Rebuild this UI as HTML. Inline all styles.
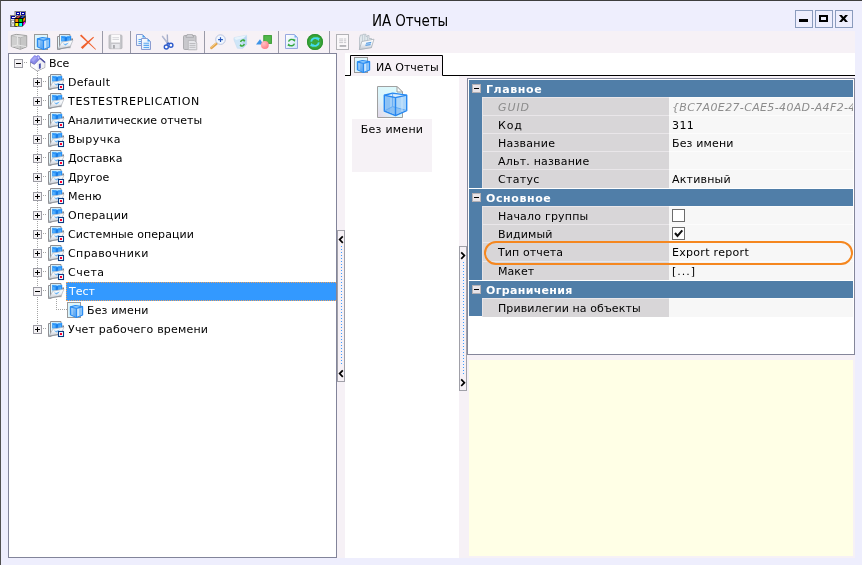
<!DOCTYPE html><html><head><meta charset="utf-8"><title>ИА Отчеты</title><style>html,body{margin:0;padding:0;background:#eeeefd;overflow:hidden}
body{width:862px;height:565px;position:relative;font-family:"DejaVu Sans","Liberation Sans",sans-serif;font-size:11px;color:#000}
#win{will-change:transform;position:absolute;left:0;top:0;width:862px;height:565px;background:#eeeefd;border-top:1px solid #3e3e3e;border-left:1px solid #505050;box-sizing:border-box}
#win>*{position:absolute}
.ic{position:absolute;overflow:visible}
#win>.ic{margin-left:-1px;margin-top:-1px}
#title{left:371px;top:13px;font-family:"DejaVu Sans Condensed","Liberation Sans",sans-serif;font-size:15px;letter-spacing:-.1px;line-height:17px;margin-top:-1px;white-space:nowrap}
.wb{top:9px;width:16px;height:16px;border:1px solid #8a9bbd;margin-left:-1px}
.wb i{position:absolute;display:block}
.mn{left:3px;top:8px;width:9px;height:3px;background:#000}
.mx{left:3px;top:4px;width:5px;height:3px;border:2px solid #000}
#panel{left:7px;top:30px;width:847px;height:527px;background:#f6f1f6}
#panel>*{position:absolute}
.tsep{top:0;width:1px;height:22px;background:#9a9aa8}
#tree{left:0;top:22px;width:327px;height:503px;border:1px solid #82849a;background:#fff;overflow:hidden}
#tree>*{position:absolute}
.tl{height:19px;line-height:20px;padding:0 3px;white-space:nowrap}
.tl.sel{background:#3399ff;color:#fff;right:0;height:17px;line-height:18px;top:228px !important;border:1px dotted #e8a060;border-right:0;left:57px !important;padding-left:2px}
.eb{width:7px;height:7px;border:1px solid #9c9ca4;background:#f4f2f4;position:absolute}
.eb:before{content:"";position:absolute;left:1px;top:3px;width:5px;height:1px;background:#000}
.eb.plus:after{content:"";position:absolute;left:3px;top:1px;width:1px;height:5px;background:#000}
.hd{height:1px;background:linear-gradient(90deg,#a4a4a4 50%,transparent 50%) 0 0/2px 1px}
.vd{width:1px;background:linear-gradient(180deg,#a4a4a4 50%,transparent 50%) 0 0/1px 2px}
.sph{width:6px;border:1px solid #a0a0a8;background:#f6f1f6;box-sizing:content-box}
.sph svg{position:absolute;left:-1px;top:-1px}
#tabstrip{left:337px;top:22px;width:510px;height:22px;background:#fff}
#tab{left:337px;top:22px}
#tabtxt{left:368px;top:30px;line-height:14px;white-space:nowrap}
#ilist{left:337px;top:45px;width:114px;height:482px;background:#fff}
#item{position:absolute;left:7px;top:9px;width:80px;height:87px;background:#f6f2f6}
#itemtop{position:absolute;left:0;top:0;width:80px;height:34px;background:#fff}
#itemtxt{position:absolute;left:0;top:38px;letter-spacing:.25px;width:80px;text-align:center;line-height:14px;white-space:nowrap}
#pg{left:459px;top:47px;width:384px;height:273px;border:1px solid #84869a;background:#fff;padding:1px}
#pg>*{position:absolute}
.gh{left:1px;width:384px;height:17px;background:#507ea8;color:#fff;font-weight:bold}
.gh span{position:absolute;left:17px;top:3px;line-height:14px;letter-spacing:.6px;white-space:nowrap}
.gb{left:3px;top:4px;background:#e8e4e8;border-color:#b4b0b4}
.gl,.gv{margin-top:0px;line-height:20px;white-space:nowrap;overflow:hidden;box-sizing:border-box}
.gl{left:14px;width:187px;border-left:1px solid #e6e3e6;border-top:1px solid #e9e6e9;background:#d8d6d8;padding-left:15px}
.gv{left:201px;width:184px;background:#f7f7f7;padding-left:3px;border-top:1px solid #fcfcfc}
.dis{color:#8c8c8c;font-style:italic}
.gw{left:1px;width:384px;height:1px;background:#fff}
.cb{display:inline-block;width:11px;height:11px;border:1px solid #6c6c6c;background:#fff;vertical-align:top;margin-top:2px;position:relative}
.cb svg{position:absolute;left:0;top:0}
#pill{left:16px;top:162px;width:365px;height:20px;border:2px solid #f5871f;border-radius:12px}
#yellow{left:461px;top:329px;width:384px;height:196px;background:#ffffe6}

#strip{left:1px;top:1px;width:13px;height:236px;background:#507ea8}
#tabfill{left:435px;top:45px;width:16px;height:2px;background:#fff}
</style></head><body>
<svg width="0" height="0" style="position:absolute"><defs>
<linearGradient id="g-page" x1="0" y1="0" x2="1" y2="1"><stop offset="0" stop-color="#ffffff"/><stop offset="1" stop-color="#cfe4fa"/></linearGradient>
<linearGradient id="g-flap" x1="0" y1="0" x2="0" y2="1"><stop offset="0" stop-color="#ffffff"/><stop offset=".45" stop-color="#f0f4f8"/><stop offset="1" stop-color="#c4c8d0"/></linearGradient>
<linearGradient id="g-cl" x1="0" y1="0" x2=".6" y2="1"><stop offset="0" stop-color="#94c8f8"/><stop offset="1" stop-color="#5ea8f2"/></linearGradient>
<linearGradient id="g-cr" x1="0" y1="0" x2="1" y2="0"><stop offset="0" stop-color="#b8dcfc"/><stop offset="1" stop-color="#88c2f8"/></linearGradient>
<linearGradient id="g-bpage" x1="1" y1="0" x2="0" y2="1"><stop offset="0" stop-color="#dcfbfd"/><stop offset=".6" stop-color="#dcf6fb"/><stop offset="1" stop-color="#e4d6e8"/></linearGradient>
<radialGradient id="g-pink" cx=".35" cy=".3" r=".8"><stop offset="0" stop-color="#ffc0c4"/><stop offset="1" stop-color="#ff7884"/></radialGradient>
<symbol id="i-app" viewBox="0 0 16 17" overflow="visible">
<rect x="5" y="0.500" width="10.500" height="10" fill="#d8d8d8" stroke="#808080" stroke-width="1"/>
<rect x="6" y="1" width="4" height="3" fill="#0000a0"/><rect x="11" y="1" width="4" height="3" fill="#0000a0"/>
<rect x="7" y="2" width="2" height="1" fill="#fff"/><rect x="12" y="2" width="2" height="1" fill="#fff"/>
<rect x="0.500" y="4.500" width="6" height="11" fill="#d8d8d8" stroke="#808080" stroke-width="1"/>
<rect x="1" y="5" width="4" height="3" fill="#0000a0"/><rect x="2" y="6" width="3" height="1" fill="#fff"/>
<rect x="1.500" y="9.500" width="3" height="2" fill="#fff" stroke="#808080" stroke-width=".6"/><rect x="1.500" y="13" width="3" height="2" fill="#fff" stroke="#808080" stroke-width=".6"/>
<path d="M4.500 7.500 L8 4.500 H15.500 V12 L12.500 15.500 H4.500 Z" fill="#000"/>
<path d="M6 6.800 L8 5.300 H10.800 L8.800 6.800 Z" fill="#ff6060"/><path d="M10.200 6.800 L12.200 5.300 H15 L13 6.800 Z" fill="#3060ff"/>
<rect x="5.300" y="8" width="3" height="3" fill="#ff8c00"/><rect x="9.200" y="8" width="3" height="3" fill="#00e000"/>
<rect x="5.300" y="12" width="3" height="3" fill="#ffff00"/><rect x="9.200" y="12" width="3" height="3" fill="#00ffff"/>
<path d="M13.200 8 L15 6.200 V9.300 L13.200 11 Z" fill="#ff8c00"/><path d="M13.200 12 L15 10.200 V12.300 L13.200 14.500 Z" fill="#ff00ff"/>
</symbol>
<symbol id="i-cube_g" viewBox="0 0 16 16" overflow="visible">
<path d="M0.300 1.600 L5.300 0.400 L15.700 1.600 V12.800 L9.300 15.300 L0.300 12.500 Z" fill="#d6d6d6" stroke="#9c9c9c" stroke-width="1" stroke-linejoin="round"/>
<path d="M0.800 2.200 L9 4.100 V14.700 L0.800 12.100Z" fill="#cfcfcf"/>
<path d="M9.800 4.100 L15.200 2.200 V12.400 L9.800 14.600Z" fill="#c6c6c6"/>
<path d="M0.300 1.600 L9.300 3.700 L15.700 1.600 M9.300 3.700 V15.300" fill="none" stroke="#b0b0b0" stroke-width="1"/>
<path d="M6.500 1.500 V11 L0.800 12.300 M6.500 11 L15.300 12.600" fill="none" stroke="#e6e6e6" stroke-width="1"/>
<path d="M1.500 1.900 L5.500 1 L14 1.900 L9.300 3.200Z" fill="#e2e2e2"/>
</symbol>
<symbol id="i-cube" viewBox="0 0 16 16" overflow="visible">
<rect x="0.500" y="0.500" width="13" height="15" fill="#dcf5fc" stroke="#9a9a9a" stroke-width="1"/>
<path d="M3.400 4.900 L8.300 3.600 L15.600 4.700 V13 L9.400 15.500 L3.400 12.800 Z" fill="#7cbcf8" stroke="#2a8cf2" stroke-width="1.200" stroke-linejoin="round"/>
<path d="M4.100 5.800 L8.700 7 V14.400 L4.100 12.400Z" fill="url(#g-cl)"/>
<path d="M10.100 7 L14.900 5.600 V12.600 L10.100 14.500Z" fill="url(#g-cr)"/>
<path d="M3.400 4.900 L9.400 6.300 L15.600 4.700 M9.400 6.300 V15.500" fill="none" stroke="#2a8cf2" stroke-width="1.200"/>
<path d="M5.500 4.900 L8.400 4 L13 4.800 L9.400 5.600Z" fill="#8ccafc"/>
<path d="M11.200 6.800 V14 " stroke="#e0f2ff" stroke-width=".9"/>
<path d="M13 6.200 V13.300" stroke="#6cb4f6" stroke-width=".8"/>
<path d="M5.300 6.300 V12.800" stroke="#a4d2fa" stroke-width=".8"/>
</symbol>
<symbol id="i-fold" viewBox="0 0 16 16" overflow="visible">
<path d="M0.500 2.500 H3 V15.500 H0.500Z" fill="#e4f6fb" stroke="#909094" stroke-width="1"/>
<path d="M2.500 0.500 H13 V13.300 H2.500Z" fill="#dff5fc" stroke="#8e8e92" stroke-width="1"/>
<path d="M7 13 H13.500 V14.200 H7Z" fill="#b4b4b8"/>
<rect x="4.200" y="1.900" width="10" height="5.600" fill="#2690f6"/>
<path d="M4.600 2 H13.900 L12.400 3.200 H6.200Z" fill="#4aa8fc"/>
<path d="M8.300 2.400 H10.300 L10 2.900 H8.600Z" fill="#e4f4ff"/>
<path d="M8.400 3.200 H9.600 V7.400 H8.400Z" fill="#0f70e0"/>
<path d="M5.600 3.800 V6.800 M6.800 4.200 V6.800 M11 4.200 V6.800 M12.300 3.800 V6.800" stroke="#6cbcfc" stroke-width=".8"/>
<path d="M14.300 4.600 H16 V6.400 H14.300Z" fill="#7c7c84"/>
<path d="M0.700 15.400 L4.900 8.100 L15.900 6.200 L13.200 12.800 Z" fill="url(#g-flap)" stroke="#b0b4bc" stroke-width=".7" stroke-linejoin="round"/>
<path d="M6 9.200 L8 10 L11.800 8.600 L10.500 10 L8.600 11.400 L7 10.400Z" fill="#58acf6" opacity=".9"/>
<path d="M0.800 15.300 L12.800 13" stroke="#94989e" stroke-width="1.100"/>
</symbol>
<symbol id="i-fold_r" viewBox="0 0 16 16" overflow="visible">
<use href="#i-fold"/>
<rect x="10.500" y="10.500" width="5" height="5" fill="#fff" stroke="#0c3c80" stroke-width="1.100"/>
<rect x="12" y="12" width="2" height="2" fill="#ff0030"/>
</symbol>
<symbol id="i-home" viewBox="0 0 16 16" overflow="visible">
<path d="M0.500 7 V11.500 L7.200 16 L14.800 12.500 V7 L10 3 L4.500 9Z" fill="#fbfbfd" stroke="#94949c" stroke-width=".8" stroke-linejoin="round"/>
<path d="M7.200 15.600 L14.400 12.300 V7.500 L10 3.600 L6.500 8 L7.200 10Z" fill="#f0f0f5"/>
<path d="M0.200 4.800 L4.300 0.300 H5.700 V0.900 H6.900 V0.300 H8.700 L10.100 1.600 V3.400 L4.400 9.300 L0.200 7 Z" fill="#8a8ae8"/>
<path d="M1.200 5 L4.600 1.400 L7.500 2.600 L3.500 6.800Z" fill="#a4a4f4"/>
<path d="M7.600 1.800 L8.800 1.400 L9.300 3.400 L8.400 4.200Z" fill="#c8c8fc"/>
<path d="M0.200 7 L4.400 9.300 L10.100 3.400" fill="none" stroke="#6464c4" stroke-width=".8"/>
<path d="M10.100 3.200 L15 7.500" stroke="#4a4aa2" stroke-width="1.500"/>
<path d="M8.900 8.900 L10.800 8.300 V13.200 L8.900 14Z" fill="#4850ae"/>
</symbol>
<symbol id="i-del" viewBox="0 0 16 16" overflow="visible">
<path d="M0 1.800 L1.300 0.500 L16 15.200 L15.500 15.800 Z" fill="#f0602c"/>
<path d="M13.300 2.700 L14 3.400 L2.600 15 L0.800 13.300 Z" fill="#f0602c"/>
</symbol>
<symbol id="i-save" viewBox="0 0 16 16" overflow="visible">
<path d="M2 1 H13 Q14 1 14 2 V14 Q14 14.700 13 14.700 H2 Q1 14.700 1 14 V2 Q1 1 2 1Z" fill="#c6c6ca" stroke="#b4b4b8" stroke-width=".8"/>
<rect x="3.200" y="0.800" width="8.800" height="7.700" fill="#fbfafb"/>
<path d="M4.500 3.700 H11 M4.500 5.500 H11" stroke="#d8d8dc" stroke-width="1"/>
<rect x="3.500" y="10" width="8.200" height="4.500" fill="#e6e6ea"/>
<rect x="5" y="11" width="1.900" height="3.500" fill="#a8a8ac"/>
</symbol>
<symbol id="i-copy" viewBox="0 0 16 16" overflow="visible">
<path d="M0.500 0.500 H6.500 L9.500 3.500 V11.500 H0.500Z" fill="url(#g-page)" stroke="#8c9cd0" stroke-width="1"/>
<path d="M6.500 0.500 L9.500 3.500 H6.500Z" fill="#4aa0f0"/>
<path d="M2.500 5.500 H5.500 M2.500 7.500 H5.500 M2.500 9.500 H5.500" stroke="#5aa8f0" stroke-width="1.100"/>
<path d="M5.500 4.500 H11.500 L14.500 7.500 V15.500 H5.500Z" fill="url(#g-page)" stroke="#8c9cd0" stroke-width="1"/>
<path d="M11.500 4.500 L14.500 7.500 H11.500Z" fill="#4aa0f0"/>
<path d="M7.500 9.300 H13 M7.500 11.400 H13 M7.500 13.500 H13" stroke="#5aa8f0" stroke-width="1.100"/>
</symbol>
<symbol id="i-cut" viewBox="0 0 16 16" overflow="visible">
<path d="M3.200 2 L8.500 9 M8.300 0.500 L8.600 9" stroke="#a4acc8" stroke-width="1.400" fill="none"/>
<path d="M3.700 2.200 L8.200 8.500" stroke="#e8ecf8" stroke-width=".5" fill="none" stroke-dasharray=".8 .8"/>
<circle cx="7.300" cy="13" r="2" fill="#fff" stroke="#2f5ccc" stroke-width="1.400"/>
<circle cx="11.900" cy="11.200" r="2" fill="#fff" stroke="#2f5ccc" stroke-width="1.400"/>
<path d="M8.500 8.800 L8 11 M8.700 8.800 L10.500 9.700" stroke="#2f5ccc" stroke-width="1.400"/>
</symbol>
<symbol id="i-paste" viewBox="0 0 16 16" overflow="visible">
<rect x="1.500" y="1.500" width="12.500" height="14" rx="1.200" fill="#c8c8cc" stroke="#acacb0" stroke-width="1"/>
<path d="M5 1.700 V0.600 H10.500 V1.700 H11.500 V3.300 H4 V1.700Z" fill="#d4d4d8" stroke="#a4a4a8" stroke-width=".8"/>
<path d="M6.300 6.500 H12.300 L14.800 9 V15.800 H6.300Z" fill="#e6e6ea" stroke="#b4b4b8" stroke-width=".8"/>
<path d="M7.500 9.500 H13.500 M7.500 11.400 H13.500 M7.500 13.300 H13.500" stroke="#bcbcc0" stroke-width="1"/>
</symbol>
<symbol id="i-zoom" viewBox="0 0 16 16" overflow="visible">
<path d="M1.500 13.800 L6.600 9.500" stroke="#e4a448" stroke-width="2.600" stroke-linecap="round"/>
<path d="M1.300 13.200 L6.200 9" stroke="#f6d498" stroke-width=".9" stroke-linecap="round"/>
<circle cx="10.500" cy="5.600" r="4.800" fill="#f0f6ff" stroke="#bcc6e0" stroke-width="1"/>
<path d="M8.100 5.600 H12.900 M10.500 3.200 V8" stroke="#2a5abc" stroke-width="1.200"/>
</symbol>
<symbol id="i-refr1" viewBox="0 0 16 16" overflow="visible">
<path d="M1 3.700 L13.600 1.200 V10.200 L9.600 14.600 L4.300 14.200 L1 6Z" fill="#cfe6f8" stroke="#c4dcf0" stroke-width=".6"/>
<path d="M1 3.700 L13.600 1.200 L13.600 3 L3 6Z" fill="#e8f4fc"/>
<path d="M9.600 14.600 L13.600 10.200 V1.200 L9.200 5.500Z" fill="#b8d8f2"/>
<path d="M7.600 8 A2.300 3 0 0 1 11.300 6.800 M11.300 10 A2.300 3 0 0 1 7.600 11.200" fill="none" stroke="#3cac3c" stroke-width="1.500"/>
<path d="M10.300 5 L12.400 6.300 L11 8.300Z M8.600 13 L6.500 11.700 L7.900 9.700Z" fill="#3cac3c"/>
</symbol>
<symbol id="i-shapes" viewBox="0 0 16 16" overflow="visible">
<rect x="7.800" y="1.600" width="7.600" height="7.800" fill="#52b84a" stroke="#3a9c34" stroke-width="1"/>
<path d="M0 10.600 L4 5.300 L7.500 10.600Z" fill="#3c94e8"/>
<circle cx="8.900" cy="11" r="3.900" fill="url(#g-pink)"/>
</symbol>
<symbol id="i-refr2" viewBox="0 0 16 16" overflow="visible">
<path d="M1.500 0.500 H10.500 L13.500 3.500 V14.500 H1.500Z" fill="url(#g-page)" stroke="#98a8e0" stroke-width="1"/>
<path d="M10.500 0.500 L13.500 3.500 H10.500Z" fill="#78b0f0"/>
<path d="M4.600 7.600 A3 2.600 0 0 1 10 6.500 M10.400 9.600 A3 2.600 0 0 1 5 10.700" fill="none" stroke="#34a83c" stroke-width="1.400"/>
<path d="M9 4.800 L11.600 5.700 L10.300 8Z M6 12.400 L3.400 11.500 L4.700 9.200Z" fill="#34a83c"/>
</symbol>
<symbol id="i-refr3" viewBox="0 0 16 16" overflow="visible">
<circle cx="8" cy="8" r="8" fill="#3aa63a"/>
<circle cx="8" cy="8" r="7.400" fill="none" stroke="#2e9430" stroke-width="1.200"/>
<path d="M4.200 7.600 A3.900 3.600 0 0 1 10.800 5.200 M11.800 8.400 A3.900 3.600 0 0 1 5.200 10.800" fill="none" stroke="#44dcf0" stroke-width="1.900"/>
<path d="M9.300 3 L12.900 4 L11.300 7.200Z M6.700 13 L3.100 12 L4.700 8.800Z" fill="#44dcf0"/>
</symbol>
<symbol id="i-doc" viewBox="0 0 16 16" overflow="visible">
<rect x="1.500" y="0.500" width="12" height="15" fill="#faf8fa" stroke="#b2b2b6" stroke-width="1"/>
<path d="M4.200 5 H8.200 M9 5 H11.200 M4.200 6.800 H8.200 M9 6.800 H11.200 M4.200 8.600 H8.200 M9 8.600 H11.200" stroke="#c8c8cc" stroke-width="1"/>
<rect x="4.600" y="11" width="6.600" height="1.900" fill="#b4b4b8"/>
</symbol>
<symbol id="i-open" viewBox="0 0 16 16" overflow="visible">
<path d="M2.500 1 H5 V0.300 H8 V2.500 H9.500 V1.500 H11 V4.500 H13.500 V13.500 L1.500 15.500 V4 Z" fill="#e2e8ec" stroke="#b4bcc4" stroke-width=".8"/>
<path d="M4.500 1 V9 M6.800 0.500 V9 M9.500 3 V8" stroke="#c0ccd4" stroke-width=".9"/>
<path d="M3.800 7.500 L16 5.200 L13.400 13.600 L1.300 15.600Z" fill="url(#g-flap)" stroke="#a8b0b8" stroke-width=".8" stroke-linejoin="round"/>
<path d="M8.200 8.800 L13.400 7.800 L12.400 11.200 L7.300 12Z" fill="#5a9ce0"/>
<path d="M8 10.300 L12.900 9.500" stroke="#b8daf8" stroke-width=".9"/>
</symbol>
<symbol id="i-bigcube" viewBox="0 0 32 34" overflow="visible">
<path d="M1.500 1.500 H21 L26.500 7 V32.500 H1.500Z" fill="url(#g-bpage)" stroke="#a0a0a0" stroke-width="1"/>
<path d="M21 1.500 V7 H26.500Z" fill="#f4fcfe" stroke="#a0a0a0" stroke-width="1"/>
<path d="M8.300 10.200 L16.600 8.200 L30.700 10.100 V25.600 L19.500 30.500 L8.300 26 Z" fill="#a4d0f8" stroke="#2888f0" stroke-width="1.400" stroke-linejoin="round"/>
<path d="M9.200 11 L16.600 9 L29.600 10.400 L19.500 12Z" fill="#dceefc"/>
<path d="M9.200 11.600 L18.800 13.400 V29.300 L9.200 25.500Z" fill="#8cc2f4"/>
<path d="M14 12.500 L18.800 13.400 V29.300 L14 27.400Z" fill="#a0cef8"/>
<path d="M20.300 13.400 L29.900 11 V25.100 L20.300 29.300Z" fill="#acd6fa"/>
<path d="M16.600 21.600 L9 25.600 L19.500 29.800 L30 25.200Z" fill="#7ab6f0" opacity=".55"/>
<path d="M16.600 8.500 V21.600 L8.600 25.800 M16.600 21.600 L30.400 25.400" fill="none" stroke="#5ea8f4" stroke-width=".9"/>
<path d="M8.300 10.200 L19.500 12.600 L30.700 10.100 M19.500 12.600 V30.500" fill="none" stroke="#2888f0" stroke-width="1.400"/>
<path d="M26 12.200 V26.500" stroke="#d4eafc" stroke-width="1" opacity=".8"/>
</symbol>
</defs></svg>

<div id="win">
<svg class="ic" style="left:10px;top:11px" width="16" height="17"><use href="#i-app"/></svg>
<div id="title">ИА Отчеты</div>
<div class="wb" style="left:795px"><i class="mn"></i></div>
<div class="wb" style="left:815px"><i class="mx"></i></div>
<div class="wb" style="left:835px"><svg width="9" height="7" viewBox="0 0 9 7" style="position:absolute;left:3px;top:4px"><path d="M0 0 H2.800 L4.500 2 L6.200 0 H9 L6 3.500 L9 7 H6.200 L4.500 5 L2.800 7 H0 L3 3.500Z" fill="#000"/></svg></div>
<div id="panel">
<svg class="ic" style="left:3px;top:3px" width="16" height="16"><use href="#i-cube_g"/></svg>
<svg class="ic" style="left:26px;top:3px" width="16" height="16"><use href="#i-cube"/></svg>
<svg class="ic" style="left:49px;top:3px" width="16" height="16"><use href="#i-fold"/></svg>
<svg class="ic" style="left:72px;top:3px" width="16" height="16"><use href="#i-del"/></svg>
<div class="tsep" style="left:94px"></div>
<svg class="ic" style="left:100px;top:3px" width="16" height="16"><use href="#i-save"/></svg>
<div class="tsep" style="left:122px"></div>
<svg class="ic" style="left:128px;top:3px" width="16" height="16"><use href="#i-copy"/></svg>
<svg class="ic" style="left:151px;top:3px" width="16" height="16"><use href="#i-cut"/></svg>
<svg class="ic" style="left:174px;top:3px" width="16" height="16"><use href="#i-paste"/></svg>
<div class="tsep" style="left:196px"></div>
<svg class="ic" style="left:202px;top:3px" width="16" height="16"><use href="#i-zoom"/></svg>
<svg class="ic" style="left:225px;top:3px" width="16" height="16"><use href="#i-refr1"/></svg>
<svg class="ic" style="left:248px;top:3px" width="16" height="16"><use href="#i-shapes"/></svg>
<div class="tsep" style="left:270px"></div>
<svg class="ic" style="left:276px;top:3px" width="16" height="16"><use href="#i-refr2"/></svg>
<svg class="ic" style="left:299px;top:3px" width="16" height="16"><use href="#i-refr3"/></svg>
<div class="tsep" style="left:321px"></div>
<svg class="ic" style="left:327px;top:3px" width="16" height="16"><use href="#i-doc"/></svg>
<svg class="ic" style="left:350px;top:3px" width="16" height="16"><use href="#i-open"/></svg>
<div id="tree">
<div class="vd" style="left:28px;top:17px;height:257px"></div>
<div class="vd" style="left:47px;top:245px;height:11px"></div>
<div class="hd" style="left:47px;top:255px;width:11px"></div>
<div class="hd" style="left:15px;top:8px;width:4px"></div>
<div class="eb minus" style="left:5px;top:5px"></div>
<svg class="ic" style="left:21px;top:1px" width="16" height="16"><use href="#i-home"/></svg>
<div class="tl" style="left:37px;top:0px">Все</div>
<div class="hd" style="left:34px;top:27px;width:4px"></div>
<div class="eb plus" style="left:24px;top:24px"></div>
<svg class="ic" style="left:39px;top:20px" width="16" height="16"><use href="#i-fold_r"/></svg>
<div class="tl" style="left:56px;top:19px;letter-spacing:0.3px">Default</div>
<div class="hd" style="left:34px;top:46px;width:4px"></div>
<div class="eb plus" style="left:24px;top:43px"></div>
<svg class="ic" style="left:39px;top:39px" width="16" height="16"><use href="#i-fold"/></svg>
<div class="tl" style="left:56px;top:38px;letter-spacing:0.67px">TESTESTREPLICATION</div>
<div class="hd" style="left:34px;top:65px;width:4px"></div>
<div class="eb plus" style="left:24px;top:62px"></div>
<svg class="ic" style="left:39px;top:58px" width="16" height="16"><use href="#i-fold_r"/></svg>
<div class="tl" style="left:56px;top:57px">Аналитические отчеты</div>
<div class="hd" style="left:34px;top:84px;width:4px"></div>
<div class="eb plus" style="left:24px;top:81px"></div>
<svg class="ic" style="left:39px;top:77px" width="16" height="16"><use href="#i-fold_r"/></svg>
<div class="tl" style="left:56px;top:76px;letter-spacing:0.5px">Выручка</div>
<div class="hd" style="left:34px;top:103px;width:4px"></div>
<div class="eb plus" style="left:24px;top:100px"></div>
<svg class="ic" style="left:39px;top:96px" width="16" height="16"><use href="#i-fold_r"/></svg>
<div class="tl" style="left:56px;top:95px">Доставка</div>
<div class="hd" style="left:34px;top:122px;width:4px"></div>
<div class="eb plus" style="left:24px;top:119px"></div>
<svg class="ic" style="left:39px;top:115px" width="16" height="16"><use href="#i-fold_r"/></svg>
<div class="tl" style="left:56px;top:114px">Другое</div>
<div class="hd" style="left:34px;top:141px;width:4px"></div>
<div class="eb plus" style="left:24px;top:138px"></div>
<svg class="ic" style="left:39px;top:134px" width="16" height="16"><use href="#i-fold_r"/></svg>
<div class="tl" style="left:56px;top:133px;letter-spacing:0.3px">Меню</div>
<div class="hd" style="left:34px;top:160px;width:4px"></div>
<div class="eb plus" style="left:24px;top:157px"></div>
<svg class="ic" style="left:39px;top:153px" width="16" height="16"><use href="#i-fold_r"/></svg>
<div class="tl" style="left:56px;top:152px;letter-spacing:0.3px">Операции</div>
<div class="hd" style="left:34px;top:179px;width:4px"></div>
<div class="eb plus" style="left:24px;top:176px"></div>
<svg class="ic" style="left:39px;top:172px" width="16" height="16"><use href="#i-fold_r"/></svg>
<div class="tl" style="left:56px;top:171px;letter-spacing:0.07px">Системные операции</div>
<div class="hd" style="left:34px;top:198px;width:4px"></div>
<div class="eb plus" style="left:24px;top:195px"></div>
<svg class="ic" style="left:39px;top:191px" width="16" height="16"><use href="#i-fold_r"/></svg>
<div class="tl" style="left:56px;top:190px;letter-spacing:0.4px">Справочники</div>
<div class="hd" style="left:34px;top:217px;width:4px"></div>
<div class="eb plus" style="left:24px;top:214px"></div>
<svg class="ic" style="left:39px;top:210px" width="16" height="16"><use href="#i-fold_r"/></svg>
<div class="tl" style="left:56px;top:209px;letter-spacing:0.5px">Счета</div>
<div class="hd" style="left:34px;top:236px;width:4px"></div>
<div class="eb minus" style="left:24px;top:233px"></div>
<svg class="ic" style="left:39px;top:229px" width="16" height="16"><use href="#i-fold"/></svg>
<div class="tl sel" style="left:56px;top:228px">Тест</div>
<svg class="ic" style="left:58px;top:248px" width="16" height="16"><use href="#i-cube"/></svg>
<div class="tl" style="left:75px;top:247px;letter-spacing:0.15px">Без имени</div>
<div class="hd" style="left:34px;top:274px;width:4px"></div>
<div class="eb plus" style="left:24px;top:271px"></div>
<svg class="ic" style="left:39px;top:267px" width="16" height="16"><use href="#i-fold_r"/></svg>
<div class="tl" style="left:56px;top:266px;letter-spacing:0.2px">Учет рабочего времени</div>
</div>
<div class="sph" style="left:329px;top:199px;height:150px"><svg width="8" height="152"><path d="M5.8 6.3 L2.6 9.6 L5.8 12.900 M5.8 140.300 L2.6 143.600 L5.8 146.900" stroke="#000" stroke-width="1.700" fill="none"/><path d="M4.500 16 V134" stroke="#3c9cff" stroke-width="1" stroke-dasharray="1 2"/></svg></div>
<div id="tabstrip"></div><div id="tabfill"></div>
<svg id="tab" width="512" height="24" viewBox="0 0 512 24"><path d="M5.5 22.5 V3 H97.5 V22.5" fill="#f6f1f6"/><path d="M0 22.5 H5.5 V2.5 H97.5 V22.5 H510" fill="none" stroke="#000" stroke-width="1"/></svg>
<svg class="ic" style="left:346px;top:26px" width="16" height="16"><use href="#i-cube"/></svg>
<div id="tabtxt">ИА Отчеты</div>
<div id="ilist"><div id="item"><div id="itemtop"></div><svg style="position:absolute;left:24px;top:0" width="32" height="34"><use href="#i-bigcube"/></svg><div id="itemtxt">Без имени</div></div></div>
<div class="sph" style="left:451px;top:215px;height:143px"><svg width="8" height="145"><path d="M2.2 6.3 L5.4 9.6 L2.2 12.900 M2.2 133.400 L5.4 136.700 L2.2 140" stroke="#000" stroke-width="1.700" fill="none"/><path d="M4.500 16 V128" stroke="#3c9cff" stroke-width="1" stroke-dasharray="1 2"/></svg></div>
<div id="pg"><div id="strip"></div>
<div class="gh" style="top:1px"><div class="eb minus gb"></div><span>Главное</span></div>
<div class="gl dis" style="top:18px;height:18px;letter-spacing:0.9px">GUID</div><div class="gv dis" style="top:18px;height:18px;letter-spacing:0.35px">{BC7A0E27-CAE5-40AD-A4F2-4</div>
<div class="gl " style="top:36px;height:18px;letter-spacing:0.85px">Код</div><div class="gv " style="top:36px;height:18px;letter-spacing:0.4px">311</div>
<div class="gl " style="top:54px;height:18px;letter-spacing:0.25px">Название</div><div class="gv " style="top:54px;height:18px;letter-spacing:0.15px">Без имени</div>
<div class="gl " style="top:72px;height:18px;letter-spacing:0.2px">Альт. название</div><div class="gv " style="top:72px;height:18px"></div>
<div class="gl " style="top:90px;height:19px;letter-spacing:0.3px">Статус</div><div class="gv " style="top:90px;height:19px;letter-spacing:0.2px">Активный</div>
<div class="gw" style="top:109px"></div>
<div class="gh" style="top:110px"><div class="eb minus gb"></div><span>Основное</span></div>
<div class="gl " style="top:127px;height:18px;letter-spacing:0.2px">Начало группы</div><div class="gv " style="top:127px;height:18px"><i class="cb"></i></div>
<div class="gl " style="top:145px;height:18px;letter-spacing:0.15px">Видимый</div><div class="gv " style="top:145px;height:18px"><i class="cb"><svg width="11" height="11" viewBox="0 0 11 11"><path d="M2 5 L4.5 8 L9.3 2.3" stroke="#111" stroke-width="2" fill="none"/></svg></i></div>
<div class="gl " style="top:163px;height:19px;letter-spacing:0.1px">Тип отчета</div><div class="gv " style="top:163px;height:19px;letter-spacing:0.3px">Export report</div>
<div class="gl " style="top:182px;height:19px">Макет</div><div class="gv " style="top:182px;height:19px;letter-spacing:1px">[...]</div>
<div class="gw" style="top:201px"></div>
<div class="gh" style="top:202px"><div class="eb minus gb"></div><span style="letter-spacing:0.33px">Ограничения</span></div>
<div class="gl " style="top:219px;height:19px;letter-spacing:0.1px">Привилегии на объекты</div><div class="gv " style="top:219px;height:19px"></div>
<div class="gw" style="top:238px;height:36px"></div>
<div id="pill"></div>
</div>
<div id="yellow"></div>
</div></div></body></html>
